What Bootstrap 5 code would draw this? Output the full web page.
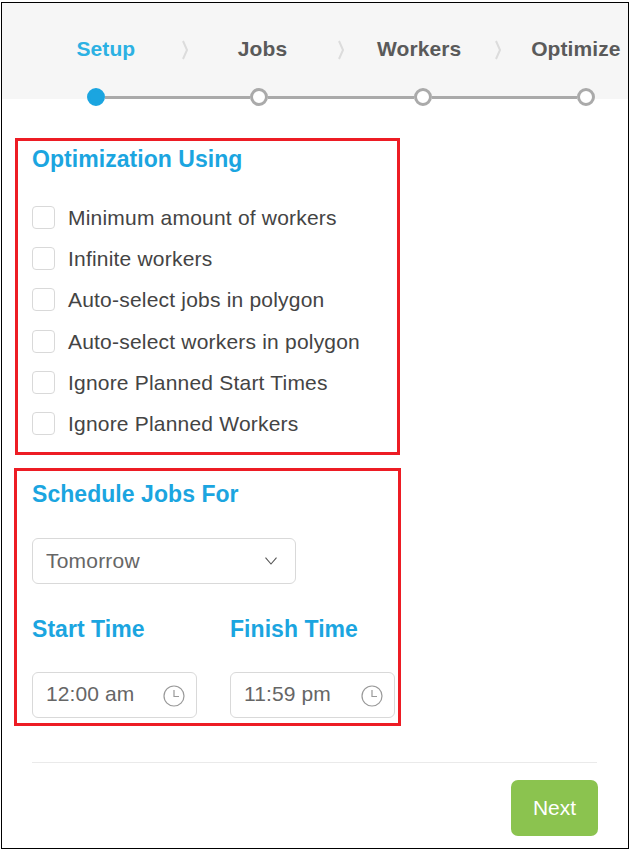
<!DOCTYPE html>
<html lang="en">
<head>
<meta charset="utf-8">
<title>Optimization setup</title>
<link href="https://cdn.jsdelivr.net/npm/bootstrap@5.3.0/dist/css/bootstrap.min.css" rel="stylesheet">
<style>
html,body{height:100%;background:#fff;}
body{font-family:"Liberation Sans",Arial,sans-serif;color:#444;padding:2px 1px 1px 1px;}
.frame{width:628px;height:847px;border:1px solid #000;background:#fff;overflow:hidden;}
.wiz-head{height:96px;background:#f6f6f6;padding-left:29px;}
.wiz-labels{height:92px;padding-top:33px;}
.wiz-label{flex:0 0 149.700px;text-align:center;font-size:21px;font-weight:700;line-height:26px;color:#5a5a5a;letter-spacing:.1px;}
.wiz-label.is-on{color:#2cb1e3;}
.wiz-chev{flex:0 0 7px;width:7px;height:20px;margin-top:4px;}
.wiz-track{margin:-7px 0 0 56px;width:508px;height:18px;position:relative;}
.wiz-dot{flex:0 0 18px;height:18px;border-radius:50%;border:3px solid #aaa;background:#fff;}
.wiz-dot.is-on{background:#1ba5e0;border-color:#1ba5e0;}
.wiz-line{flex:1 1 auto;height:3px;background:#aaa;}
.red-box{border:3px solid #ed1c24;background:#fff;}
.box-a{width:385px;height:317px;margin:39px 0 13px 13px;padding:4px 14px 0 14px;}
.box-b{width:387px;height:258px;margin:0 0 0 12px;padding:9px 0 0 15px;}
.sec-title{font-size:23px;font-weight:700;line-height:28px;color:#1ba5e0;margin:0;letter-spacing:.05px;}
.check-rows{margin-top:32.800px;}
.check-row{height:41.300px;font-size:21px;line-height:24px;color:#444;letter-spacing:.2px;}
.form-check-input.chk{width:23px;height:23px;margin:0 13px 0 0;border:1px solid #d9d9d9;border-radius:4px;flex:none;}
.form-select.sel{width:264px;height:46px;margin-top:30px;padding:0 0 0 13px;font-size:21px;letter-spacing:.2px;color:#666;border-color:#d9d9d9;border-radius:6px;background-image:url("data:image/svg+xml,%3csvg xmlns='http://www.w3.org/2000/svg' viewBox='0 0 12 8'%3e%3cpath fill='none' stroke='%23555' stroke-width='1.100' d='M.5.7 6 7 11.500.7'/%3e%3c/svg%3e");background-position:right 18px center;background-size:12px 8px;}
.time-row{margin-top:31px;gap:33px;}
.time-col{width:165px;}
.time-col .sec-title{white-space:nowrap;}
.time-box{height:46px;margin-top:29px;border:1px solid #d9d9d9;border-radius:6px;padding:0 11px 2px 13px;font-size:21px;letter-spacing:.1px;color:#666;}
.clock{width:22px;height:22px;margin-top:3px;}
.foot-rule{margin:36px 31px 0 30px;border-top:1px solid #eaeaea;height:18px;}
.foot{padding-right:30px;}
.btn.next-btn{width:87px;height:56px;background:#8bc34f;border:0;border-radius:7px;color:#fff;font-size:21px;padding:0;}
</style>
</head>
<body>
<div class="frame">
  <div class="wiz-head">
    <div class="wiz-labels d-flex">
      <div class="wiz-label is-on">Setup</div>
      <svg class="wiz-chev" viewBox="0 0 7 20"><path d="M2 1 6 10 2 19" fill="none" stroke="#dcdcdc" stroke-width="2"/></svg>
      <div class="wiz-label">Jobs</div>
      <svg class="wiz-chev" viewBox="0 0 7 20"><path d="M2 1 6 10 2 19" fill="none" stroke="#dcdcdc" stroke-width="2"/></svg>
      <div class="wiz-label">Workers</div>
      <svg class="wiz-chev" viewBox="0 0 7 20"><path d="M2 1 6 10 2 19" fill="none" stroke="#dcdcdc" stroke-width="2"/></svg>
      <div class="wiz-label">Optimize</div>
    </div>
    <div class="wiz-track d-flex align-items-center">
      <span class="wiz-dot is-on"></span><span class="wiz-line"></span>
      <span class="wiz-dot"></span><span class="wiz-line"></span>
      <span class="wiz-dot"></span><span class="wiz-line"></span>
      <span class="wiz-dot"></span>
    </div>
  </div>

  <section class="red-box box-a">
    <h2 class="sec-title">Optimization Using</h2>
    <div class="check-rows">
      <label class="check-row d-flex align-items-start"><input class="form-check-input chk" type="checkbox"><span>Minimum amount of workers</span></label>
      <label class="check-row d-flex align-items-start"><input class="form-check-input chk" type="checkbox"><span>Infinite workers</span></label>
      <label class="check-row d-flex align-items-start"><input class="form-check-input chk" type="checkbox"><span>Auto-select jobs in polygon</span></label>
      <label class="check-row d-flex align-items-start"><input class="form-check-input chk" type="checkbox"><span>Auto-select workers in polygon</span></label>
      <label class="check-row d-flex align-items-start"><input class="form-check-input chk" type="checkbox"><span>Ignore Planned Start Times</span></label>
      <label class="check-row d-flex align-items-start"><input class="form-check-input chk" type="checkbox"><span>Ignore Planned Workers</span></label>
    </div>
  </section>

  <section class="red-box box-b">
    <h2 class="sec-title">Schedule Jobs For</h2>
    <select class="form-select sel"><option>Tomorrow</option></select>
    <div class="time-row d-flex">
      <div class="time-col">
        <h2 class="sec-title">Start Time</h2>
        <div class="time-box d-flex align-items-center justify-content-between">
          <span>12:00 am</span>
          <svg class="clock" viewBox="0 0 22 22"><circle cx="11" cy="11" r="10" fill="none" stroke="#999" stroke-width="1.200"/><path d="M11 5v6.500h5" fill="none" stroke="#999" stroke-width="1.200"/></svg>
        </div>
      </div>
      <div class="time-col">
        <h2 class="sec-title">Finish Time</h2>
        <div class="time-box d-flex align-items-center justify-content-between">
          <span>11:59 pm</span>
          <svg class="clock" viewBox="0 0 22 22"><circle cx="11" cy="11" r="10" fill="none" stroke="#999" stroke-width="1.200"/><path d="M11 5v6.500h5" fill="none" stroke="#999" stroke-width="1.200"/></svg>
        </div>
      </div>
    </div>
  </section>

  <div class="foot-rule"></div>
  <div class="foot d-flex justify-content-end">
    <button type="button" class="btn next-btn">Next</button>
  </div>
</div>
<script src="https://cdn.jsdelivr.net/npm/bootstrap@5.3.0/dist/js/bootstrap.bundle.min.js"></script>
</body>
</html>
